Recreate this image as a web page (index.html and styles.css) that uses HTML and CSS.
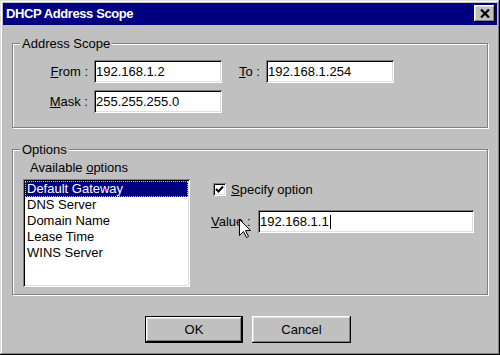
FILE: index.html
```html
<!DOCTYPE html>
<html lang="en">
<head>
  <meta charset="UTF-8" />
  <title>DHCP Address Scope</title>
  <link rel="stylesheet" href="styles.css">
</head>
<body>
  <div class="window">
    <div class="titlebar">
      <span class="title">DHCP Address Scope</span>
      <button class="close-btn" aria-label="Close">
        <svg width="10" height="9" viewBox="0 0 10 9">
          <path d="M1 0.5 L9 8.5 M9 0.5 L1 8.5" stroke="#000" stroke-width="2.2" fill="none"/>
        </svg>
      </button>
    </div>

    <div class="group scope">
      <div class="group-title">Address Scope</div>
      <div class="scope-grid">
        <span class="field-label"><u>F</u>rom :</span>
        <div class="textbox">192.168.1.2</div>
        <span class="field-label"><u>T</u>o :</span>
        <div class="textbox">192.168.1.254</div>
        <span class="field-label"><u>M</u>ask :</span>
        <div class="textbox">255.255.255.0</div>
      </div>
    </div>

    <div class="group options">
      <div class="group-title">Options</div>
      <div class="options-body">
        <div class="avail">
          <div class="avail-label">Available <u>o</u>ptions</div>
          <ul class="listbox">
            <li class="selected">Default Gateway</li>
            <li>DNS Server</li>
            <li>Domain Name</li>
            <li>Lease Time</li>
            <li>WINS Server</li>
          </ul>
        </div>
        <div class="option-edit">
          <div class="check-row">
            <span class="checkbox">
              <svg width="9" height="9" viewBox="0 0 9 9">
                <path d="M1 4 L3.5 6.5 L8 1.5" stroke="#000" stroke-width="2" fill="none"/>
              </svg>
            </span>
            <span><u>S</u>pecify option</span>
          </div>
          <div class="value-row">
            <span class="value-label"><u>V</u>alue :</span>
            <div class="textbox value-box">192.168.1.1<span class="caret"></span></div>
          </div>
        </div>
      </div>
    </div>

    <div class="buttons">
      <button class="btn default">OK</button>
      <button class="btn">Cancel</button>
    </div>

    <svg class="cursor" width="13" height="20" viewBox="0 0 13 20">
      <path d="M0.5 0.5 L0.5 16.5 L4.5 12.5 L7.5 18.5 L9.5 17.5 L6.5 11.5 L11.5 11.5 Z" fill="#fff" stroke="#000" stroke-width="1"/>
    </svg>
  </div>
</body>
</html>
```

FILE: styles.css
```css
:root {
  --face: #c0c0c0;
  --shadow: #808080;
  --light: #dfdfdf;
  --navy: #000080;
}

body {
  margin: 0;
  font-family: "Liberation Sans", Arial, sans-serif;
  font-size: 13px;
  line-height: 15px;
  color: #000;
}

.window {
  position: relative;
  width: 500px;
  height: 355px;
  box-sizing: border-box;
  padding: 3px;
  background: var(--face);
  box-shadow: inset -1px -1px #000, inset 1px 1px var(--light),
              inset -2px -2px var(--shadow), inset 2px 2px #fff;
}

.titlebar {
  height: 22px;
  background: var(--navy);
  display: flex;
  align-items: flex-start;
  justify-content: space-between;
  padding-left: 3px;
}

.title {
  color: #fff;
  font-weight: bold;
  font-size: 13px;
  letter-spacing: -0.4px;
  line-height: 22px;
}

.close-btn {
  width: 21px;
  height: 17px;
  margin: 2px 2px 0 0;
  padding: 0;
  border: none;
  background: var(--face);
  display: flex;
  align-items: center;
  justify-content: center;
  box-shadow: inset -1px -1px #000, inset 1px 1px #fff,
              inset -2px -2px var(--shadow), inset 2px 2px var(--light);
}

.group {
  margin: 0 9px 0 9px;
  border: 1px solid var(--shadow);
  box-shadow: inset 1px 1px #fff, 1px 1px #fff;
}

.scope {
  margin-top: 18px;
  padding-bottom: 14px;
}

.options {
  margin-top: 21px;
  padding-bottom: 7px;
}

.group-title {
  width: max-content;
  margin: -8px 0 0 7px;
  padding: 0 2px;
  background: var(--face);
}

.scope-grid {
  display: grid;
  grid-template-columns: 81px 128px 44px 128px;
  grid-auto-rows: 23px;
  row-gap: 7px;
  margin-top: 9px;
}

.field-label {
  text-align: right;
  padding-right: 6px;
  align-self: center;
}

.textbox {
  box-sizing: border-box;
  height: 23px;
  background: #fff;
  padding: 0 2px;
  display: flex;
  align-items: center;
  box-shadow: inset 1px 1px var(--shadow), inset -1px -1px #fff,
              inset 2px 2px #000, inset -2px -2px var(--light);
}

.options-body {
  display: flex;
  align-items: flex-start;
  gap: 21px;
  padding-left: 10px;
}

.avail-label {
  margin-top: 3px;
  padding-left: 7px;
}

.listbox {
  list-style: none;
  margin: 4px 0 0 0;
  padding: 2px;
  width: 167px;
  height: 108px;
  box-sizing: border-box;
  background: #fff;
  box-shadow: inset 1px 1px var(--shadow), inset -1px -1px #fff,
              inset 2px 2px #000, inset -2px -2px var(--light);
}

.listbox li {
  height: 16px;
  line-height: 16px;
  padding-left: 2px;
}

.listbox .selected {
  background: var(--navy);
  color: #fff;
  outline: 1px dotted #c0c0c0;
  outline-offset: -1px;
}

.option-edit {
  padding-top: 25px;
}

.check-row {
  display: flex;
  align-items: center;
  gap: 5px;
  padding-left: 2px;
}

.checkbox {
  width: 13px;
  height: 13px;
  box-sizing: border-box;
  background: #fff;
  display: flex;
  align-items: center;
  justify-content: center;
  box-shadow: inset 1px 1px var(--shadow), inset -1px -1px #fff,
              inset 2px 2px #000, inset -2px -2px var(--light);
}

.value-row {
  display: flex;
  align-items: center;
  margin-top: 13px;
}

.value-label {
  width: 47px;
}

.value-box {
  width: 216px;
}

.caret {
  display: inline-block;
  width: 1px;
  height: 14px;
  margin-left: 1px;
  background: #000;
}

.buttons {
  display: flex;
  justify-content: center;
  gap: 9px;
  margin-top: 21px;
  padding-right: 4px;
}

.btn {
  width: 98px;
  height: 27px;
  border: none;
  background: var(--face);
  font-family: inherit;
  font-size: 13px;
  color: #000;
  padding: 0;
  box-shadow: inset -1px -1px #000, inset 1px 1px #fff,
              inset -2px -2px var(--shadow), inset 2px 2px var(--light);
}

.btn + .btn {
  width: 99px;
}

.btn.default {
  box-shadow: inset 0 0 0 1px #000, inset -2px -2px #000, inset 2px 2px #fff,
              inset -3px -3px var(--shadow), inset 3px 3px var(--light);
}

.cursor {
  position: absolute;
  left: 239px;
  top: 219px;
}
```
